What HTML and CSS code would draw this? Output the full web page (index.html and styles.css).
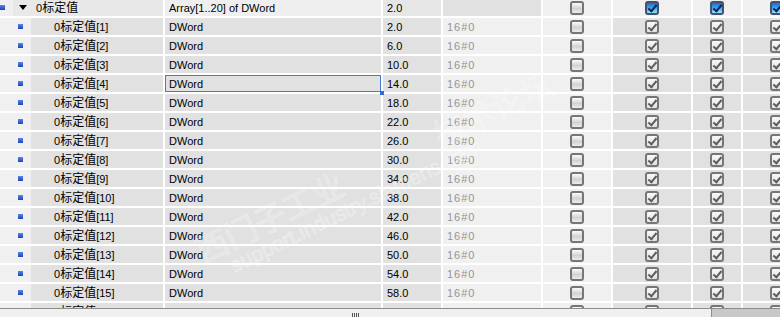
FILE: index.html
```html
<!DOCTYPE HTML>
<html>
<head>
    <meta charset="utf-8">
    <title>DB 变量表</title>
    <link rel="stylesheet" href="styles.css">
</head>
<body>
<div class="view">
    <div class="grid">
        <div class="rows">
            <div class="row top">
                <div class="c-name"><span class="lead"><i class="ico"></i></span><span class="tg"><i class="tri"></i></span><span class="lbl">0<span class="cn">标定值</span></span></div>
                <div class="cell dtype">Array[1..20] of DWord</div>
                <div class="cell start">2.0</div>
                <div class="cell def"></div>
                <div class="cell chk"><span class="cb"></span></div>
                <div class="cell chk"><span class="cb on blue"></span></div>
                <div class="cell chk"><span class="cb on blue"></span></div>
                <div class="cell chk"><span class="cb on blue"></span></div>
            </div>
            <div class="row">
                <div class="c-name"><span class="lead l1"><i class="ico"></i></span><span class="tg"></span><span class="lbl">0<span class="cn">标定值</span>[1]</span></div>
                <div class="cell dtype">DWord</div>
                <div class="cell start">2.0</div>
                <div class="cell def">16#0</div>
                <div class="cell chk"><span class="cb"></span></div>
                <div class="cell chk"><span class="cb on"></span></div>
                <div class="cell chk"><span class="cb on"></span></div>
                <div class="cell chk"><span class="cb on"></span></div>
            </div>
            <div class="row">
                <div class="c-name"><span class="lead l1"><i class="ico"></i></span><span class="tg"></span><span class="lbl">0<span class="cn">标定值</span>[2]</span></div>
                <div class="cell dtype">DWord</div>
                <div class="cell start">6.0</div>
                <div class="cell def">16#0</div>
                <div class="cell chk"><span class="cb"></span></div>
                <div class="cell chk"><span class="cb on"></span></div>
                <div class="cell chk"><span class="cb on"></span></div>
                <div class="cell chk"><span class="cb on"></span></div>
            </div>
            <div class="row">
                <div class="c-name"><span class="lead l1"><i class="ico"></i></span><span class="tg"></span><span class="lbl">0<span class="cn">标定值</span>[3]</span></div>
                <div class="cell dtype">DWord</div>
                <div class="cell start">10.0</div>
                <div class="cell def">16#0</div>
                <div class="cell chk"><span class="cb"></span></div>
                <div class="cell chk"><span class="cb on"></span></div>
                <div class="cell chk"><span class="cb on"></span></div>
                <div class="cell chk"><span class="cb on"></span></div>
            </div>
            <div class="row">
                <div class="c-name"><span class="lead l1"><i class="ico"></i></span><span class="tg"></span><span class="lbl">0<span class="cn">标定值</span>[4]</span></div>
                <div class="cell dtype sel">DWord</div>
                <div class="cell start">14.0</div>
                <div class="cell def">16#0</div>
                <div class="cell chk"><span class="cb"></span></div>
                <div class="cell chk"><span class="cb on"></span></div>
                <div class="cell chk"><span class="cb on"></span></div>
                <div class="cell chk"><span class="cb on"></span></div>
            </div>
            <div class="row">
                <div class="c-name"><span class="lead l1"><i class="ico"></i></span><span class="tg"></span><span class="lbl">0<span class="cn">标定值</span>[5]</span></div>
                <div class="cell dtype">DWord</div>
                <div class="cell start">18.0</div>
                <div class="cell def">16#0</div>
                <div class="cell chk"><span class="cb"></span></div>
                <div class="cell chk"><span class="cb on"></span></div>
                <div class="cell chk"><span class="cb on"></span></div>
                <div class="cell chk"><span class="cb on"></span></div>
            </div>
            <div class="row">
                <div class="c-name"><span class="lead l1"><i class="ico"></i></span><span class="tg"></span><span class="lbl">0<span class="cn">标定值</span>[6]</span></div>
                <div class="cell dtype">DWord</div>
                <div class="cell start">22.0</div>
                <div class="cell def">16#0</div>
                <div class="cell chk"><span class="cb"></span></div>
                <div class="cell chk"><span class="cb on"></span></div>
                <div class="cell chk"><span class="cb on"></span></div>
                <div class="cell chk"><span class="cb on"></span></div>
            </div>
            <div class="row">
                <div class="c-name"><span class="lead l1"><i class="ico"></i></span><span class="tg"></span><span class="lbl">0<span class="cn">标定值</span>[7]</span></div>
                <div class="cell dtype">DWord</div>
                <div class="cell start">26.0</div>
                <div class="cell def">16#0</div>
                <div class="cell chk"><span class="cb"></span></div>
                <div class="cell chk"><span class="cb on"></span></div>
                <div class="cell chk"><span class="cb on"></span></div>
                <div class="cell chk"><span class="cb on"></span></div>
            </div>
            <div class="row">
                <div class="c-name"><span class="lead l1"><i class="ico"></i></span><span class="tg"></span><span class="lbl">0<span class="cn">标定值</span>[8]</span></div>
                <div class="cell dtype">DWord</div>
                <div class="cell start">30.0</div>
                <div class="cell def">16#0</div>
                <div class="cell chk"><span class="cb"></span></div>
                <div class="cell chk"><span class="cb on"></span></div>
                <div class="cell chk"><span class="cb on"></span></div>
                <div class="cell chk"><span class="cb on"></span></div>
            </div>
            <div class="row">
                <div class="c-name"><span class="lead l1"><i class="ico"></i></span><span class="tg"></span><span class="lbl">0<span class="cn">标定值</span>[9]</span></div>
                <div class="cell dtype">DWord</div>
                <div class="cell start">34.0</div>
                <div class="cell def">16#0</div>
                <div class="cell chk"><span class="cb"></span></div>
                <div class="cell chk"><span class="cb on"></span></div>
                <div class="cell chk"><span class="cb on"></span></div>
                <div class="cell chk"><span class="cb on"></span></div>
            </div>
            <div class="row">
                <div class="c-name"><span class="lead l1"><i class="ico"></i></span><span class="tg"></span><span class="lbl">0<span class="cn">标定值</span>[10]</span></div>
                <div class="cell dtype">DWord</div>
                <div class="cell start">38.0</div>
                <div class="cell def">16#0</div>
                <div class="cell chk"><span class="cb"></span></div>
                <div class="cell chk"><span class="cb on"></span></div>
                <div class="cell chk"><span class="cb on"></span></div>
                <div class="cell chk"><span class="cb on"></span></div>
            </div>
            <div class="row">
                <div class="c-name"><span class="lead l1"><i class="ico"></i></span><span class="tg"></span><span class="lbl">0<span class="cn">标定值</span>[11]</span></div>
                <div class="cell dtype">DWord</div>
                <div class="cell start">42.0</div>
                <div class="cell def">16#0</div>
                <div class="cell chk"><span class="cb"></span></div>
                <div class="cell chk"><span class="cb on"></span></div>
                <div class="cell chk"><span class="cb on"></span></div>
                <div class="cell chk"><span class="cb on"></span></div>
            </div>
            <div class="row">
                <div class="c-name"><span class="lead l1"><i class="ico"></i></span><span class="tg"></span><span class="lbl">0<span class="cn">标定值</span>[12]</span></div>
                <div class="cell dtype">DWord</div>
                <div class="cell start">46.0</div>
                <div class="cell def">16#0</div>
                <div class="cell chk"><span class="cb"></span></div>
                <div class="cell chk"><span class="cb on"></span></div>
                <div class="cell chk"><span class="cb on"></span></div>
                <div class="cell chk"><span class="cb on"></span></div>
            </div>
            <div class="row">
                <div class="c-name"><span class="lead l1"><i class="ico"></i></span><span class="tg"></span><span class="lbl">0<span class="cn">标定值</span>[13]</span></div>
                <div class="cell dtype">DWord</div>
                <div class="cell start">50.0</div>
                <div class="cell def">16#0</div>
                <div class="cell chk"><span class="cb"></span></div>
                <div class="cell chk"><span class="cb on"></span></div>
                <div class="cell chk"><span class="cb on"></span></div>
                <div class="cell chk"><span class="cb on"></span></div>
            </div>
            <div class="row">
                <div class="c-name"><span class="lead l1"><i class="ico"></i></span><span class="tg"></span><span class="lbl">0<span class="cn">标定值</span>[14]</span></div>
                <div class="cell dtype">DWord</div>
                <div class="cell start">54.0</div>
                <div class="cell def">16#0</div>
                <div class="cell chk"><span class="cb"></span></div>
                <div class="cell chk"><span class="cb on"></span></div>
                <div class="cell chk"><span class="cb on"></span></div>
                <div class="cell chk"><span class="cb on"></span></div>
            </div>
            <div class="row">
                <div class="c-name"><span class="lead l1"><i class="ico"></i></span><span class="tg"></span><span class="lbl">0<span class="cn">标定值</span>[15]</span></div>
                <div class="cell dtype">DWord</div>
                <div class="cell start">58.0</div>
                <div class="cell def">16#0</div>
                <div class="cell chk"><span class="cb"></span></div>
                <div class="cell chk"><span class="cb on"></span></div>
                <div class="cell chk"><span class="cb on"></span></div>
                <div class="cell chk"><span class="cb on"></span></div>
            </div>
            <div class="row">
                <div class="c-name"><span class="lead l1"><i class="ico"></i></span><span class="tg"></span><span class="lbl">0<span class="cn">标定值</span>[16]</span></div>
                <div class="cell dtype">DWord</div>
                <div class="cell start">62.0</div>
                <div class="cell def">16#0</div>
                <div class="cell chk"><span class="cb"></span></div>
                <div class="cell chk"><span class="cb on"></span></div>
                <div class="cell chk"><span class="cb on"></span></div>
                <div class="cell chk"><span class="cb on"></span></div>
            </div>
        </div>

        <!-- 论坛水印 -->
        <div class="wm">
            <div class="wm-cn">西门子工业<span class="wm-gap"></span>技术论坛</div>
            <div class="wm-en">support.industry.siemens.com</div>
        </div>
    </div>

    <div class="hscroll">
        <div class="thumb"><i class="grip"></i></div>
    </div>
</div>
</body>
</html>
```

FILE: styles.css
```css
html, body {
    margin: 0;
    padding: 0;
    background: #ffffff;
}

body {
    font-family: "Liberation Sans", "Noto Sans CJK SC", sans-serif;
    font-size: 11px;
    color: #000000;
}

.view {
    width: 780px;
    height: 317px;
    display: flex;
    flex-direction: column;
    overflow: hidden;
}

.grid {
    flex: 1;
    position: relative;
    overflow: hidden;
}

.rows {
    margin-top: -1px;
    display: flex;
    flex-direction: column;
    gap: 2px;
}

/*表格行*/
.row {
    display: grid;
    grid-template-columns: 163px 216px 58px 98px 68px 78px 48px 68px;
    column-gap: 2px;
    width: max-content;
    height: 17px;
}

.cell {
    display: flex;
    align-items: center;
    box-sizing: border-box;
    padding: 2px 0 0 4px;
    line-height: 15px;
    white-space: nowrap;
    overflow: hidden;
    background: #e1e1e1;
}

.cn {
    font-size: 12px;
}

/*名称列*/
.c-name {
    display: flex;
    align-items: center;
    line-height: 17px;
    white-space: nowrap;
    overflow: hidden;
    background: #e1e1e1;
}
.c-name .lead {
    flex: none;
    width: 13px;
    height: 100%;
    display: flex;
    align-items: center;
    background: #f0f0f0;
}
.c-name .lead.l1 {
    width: 31px;
    padding-left: 18px;
    box-sizing: border-box;
}
.c-name .tg {
    flex: none;
    width: 23px;
    height: 100%;
    padding-left: 6px;
    box-sizing: border-box;
    display: flex;
    align-items: center;
}
.c-name .lbl {
    padding-top: 2px;
    line-height: 15px;
}

.ico {
    width: 5px;
    height: 5px;
    background: linear-gradient(#5a86e8, #1c44b6);
}

.tri {
    width: 0;
    height: 0;
    border-left: 4px solid transparent;
    border-right: 4px solid transparent;
    border-top: 5px solid #000000;
}

.def {
    color: #959595;
    letter-spacing: 1px;
    background: #f0f0f0;
}

.row .chk {
    justify-content: center;
    padding: 0;
}
.row .chk:nth-child(5) {
    background: #f0f0f0;
}

/*首行*/
.row.top .c-name { background: #e8e8e8; }
.row.top .dtype { background: #efefef; }
.row.top .start { background: #e6e6e6; }
.row.top .def { background: #e1e1e1; }
.row.top .chk { background: #f0f0f0; }

/*选中单元格*/
.cell.sel {
    position: relative;
    z-index: 1;
    overflow: visible;
    box-shadow: inset 0 0 0 1px #3f7bd8;
}
.cell.sel:after {
    content: "";
    position: absolute;
    right: -3px;
    bottom: -3px;
    width: 4px;
    height: 4px;
    background: #2f6fd6;
}

/*复选框*/
.cb {
    position: relative;
    width: 14px;
    height: 14px;
    box-sizing: border-box;
    border: 2px solid #767676;
    border-radius: 3px;
    background: linear-gradient(#fbfbfb, #d2d2d2 55%, #ececec);
}
.cb.on {
    background: linear-gradient(#f8f8f8, #e2e2e2);
}
.cb.on:after {
    content: "";
    position: absolute;
    left: 3px;
    top: 0;
    width: 3px;
    height: 7px;
    border: solid #5e5e5e;
    border-width: 0 2px 2px 0;
    transform: rotate(40deg);
}
.cb.blue {
    border-color: #45506a;
    background: linear-gradient(#1c6cd0, #3ca6ee 50%, #8fe6ff);
}
.cb.blue:after {
    border-color: #0d2350;
}

/*水印*/
.wm {
    position: absolute;
    left: 202px;
    top: 232px;
    transform: rotate(-26deg);
    transform-origin: 0 50%;
    white-space: nowrap;
    pointer-events: none;
    color: rgba(255, 255, 255, 0.18);
    -webkit-text-stroke: 0.5px rgba(255, 255, 255, 0.5);
}
.wm-cn {
    font-family: "Noto Sans CJK SC", sans-serif;
    font-size: 32px;
    line-height: 36px;
}
.wm-gap {
    display: inline-block;
    width: 104px;
}
.wm-en {
    font-family: "Liberation Sans", sans-serif;
    font-size: 21px;
    line-height: 22px;
    padding-left: 24px;
}

/*横向滚动条*/
.hscroll {
    flex: none;
    height: 8px;
    display: flex;
    border-top: 1px solid #8c8c8c;
    background: #c8c8c8;
}
.hscroll .thumb {
    width: 711px;
    background: #f0f0f0;
    border-right: 1px solid #8c8c8c;
    display: flex;
    justify-content: center;
    align-items: flex-end;
}
.hscroll .grip {
    width: 8px;
    height: 4px;
    background: repeating-linear-gradient(90deg, #555555 0 1px, transparent 1px 2px);
}
```
